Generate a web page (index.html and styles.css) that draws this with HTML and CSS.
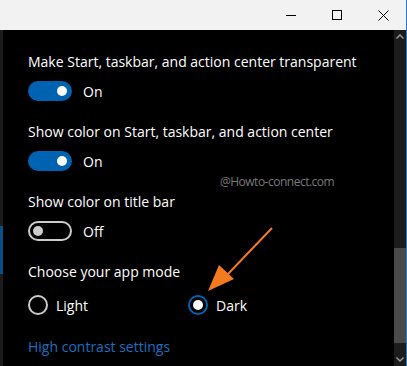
FILE: index.html
```html
<!DOCTYPE html>
<html lang="en">
<head>
    <meta charset="UTF-8">
    <title>Colors</title>
    <link rel="stylesheet" href="styles.css">
</head>
<body>
  <div class="window">
    <header class="titlebar">
      <div class="tb-btn">
        <svg width="10" height="10" viewBox="0 0 10 10"><path d="M0 5.5h10" stroke="#000" stroke-width="1"/></svg>
      </div>
      <div class="tb-btn">
        <svg width="10" height="10" viewBox="0 0 10 10"><rect x="0.5" y="0.5" width="9" height="9" fill="none" stroke="#000" stroke-width="1"/></svg>
      </div>
      <div class="tb-btn">
        <svg width="11" height="11" viewBox="0 0 11 11"><path d="M0.5 0.5L10.5 10.5M10.5 0.5L0.5 10.5" stroke="#000" stroke-width="1"/></svg>
      </div>
    </header>

    <div class="frame">
      <div class="side-strip"><div class="side-mark"></div></div>

      <main class="content">
        <p class="label">Make Start, taskbar, and action center transparent</p>
        <div class="switch-row">
          <span class="toggle on"><span class="knob"></span></span>
          <span class="state">On</span>
        </div>

        <p class="label">Show color on Start, taskbar, and action center</p>
        <div class="switch-row">
          <span class="toggle on"><span class="knob"></span></span>
          <span class="state">On</span>
        </div>

        <p class="label">Show color on title bar</p>
        <div class="switch-row">
          <span class="toggle off"><span class="knob"></span></span>
          <span class="state">Off</span>
        </div>

        <p class="label label-mode">Choose your app mode</p>
        <div class="radio-row">
          <label class="radio-opt"><span class="radio"></span>Light</label>
          <label class="radio-opt"><span class="radio checked"><span class="dot"></span></span>Dark</label>
        </div>

        <a class="link" href="#">High contrast settings</a>

        <!-- watermark + arrow lie over the page -->
        <span class="watermark">@Howto-connect.com</span>
        <svg class="arrow" width="80" height="80" viewBox="0 0 80 80">
          <path d="M67 5L22 52" stroke="#f37a1f" stroke-width="2"/>
          <path d="M3 68L14 42L29 56Z" fill="#f37a1f"/>
        </svg>
      </main>

      <div class="scrollbar">
        <svg class="chev" width="8" height="5" viewBox="0 0 8 5"><path d="M0.5 4.5L4 1L7.5 4.5" fill="none" stroke="#a0a0a0" stroke-width="1.3"/></svg>
        <div class="track"><div class="thumb"></div></div>
        <svg class="chev" width="8" height="5" viewBox="0 0 8 5"><path d="M0.5 0.5L4 4L7.5 0.5" fill="none" stroke="#a0a0a0" stroke-width="1.3"/></svg>
      </div>
    </div>
  </div>
</body>
</html>
```

FILE: styles.css
```css
body {
    margin: 0;
    background-color: #000;
    font-family: "Open Sans", "Noto Sans", sans-serif;
}

.window {
    width: 407px;
    height: 366px;
    display: flex;
    flex-direction: column;
    border-right: 1px solid #1b7fd0;
    box-sizing: border-box;
    overflow: hidden;
}

/* title bar */
.titlebar {
    height: 30px;
    background-color: #f2f2f2;
    display: flex;
    justify-content: flex-end;
}

.tb-btn {
    width: 46px;
    height: 30px;
    display: flex;
    align-items: center;
    justify-content: center;
}

.frame {
    flex: 1;
    display: flex;
    min-height: 0;
}

.side-strip {
    width: 3px;
    background-color: #1c1c1c;
    padding-top: 196px;
}

.side-mark {
    height: 48px;
    background-color: #0b4f88;
}

/* settings */
.content {
    flex: 1;
    position: relative;
    background-color: #000;
    padding: 22px 0 0 25px;
    color: #fff;
}

.label {
    margin: 0;
    font-size: 14px;
    line-height: 20px;
    height: 20px;
    white-space: nowrap;
}

.switch-row {
    display: flex;
    align-items: center;
    height: 20px;
    margin: 9px 0 21px;
}

.toggle {
    width: 44px;
    height: 20px;
    border-radius: 10px;
    box-sizing: border-box;
    display: flex;
    align-items: center;
}

.toggle.on {
    background-color: #0063b1;
    justify-content: flex-end;
    padding-right: 5px;
}

.toggle.off {
    border: 2px solid #cccccc;
    padding-left: 3px;
}

.knob {
    width: 10px;
    height: 10px;
    border-radius: 50%;
    background-color: #fff;
}

.toggle.off .knob {
    background-color: #cccccc;
}

.state {
    margin-left: 11px;
    font-size: 14px;
}

.radio-row {
    display: flex;
    height: 20px;
    margin: 13px 0 22px;
}

.radio-opt {
    width: 160px;
    display: flex;
    align-items: center;
    font-size: 14px;
}

.radio {
    width: 20px;
    height: 20px;
    border-radius: 50%;
    border: 2px solid #cccccc;
    box-sizing: border-box;
    margin-right: 8px;
    display: flex;
    align-items: center;
    justify-content: center;
}

.radio.checked {
    border-color: #0063b1;
}

.dot {
    width: 10px;
    height: 10px;
    border-radius: 50%;
    background-color: #fff;
}

.link {
    display: block;
    font-size: 14px;
    line-height: 20px;
    color: #1a6fc0;
    text-decoration: none;
}

.watermark {
    position: absolute;
    left: 217px;
    top: 143px;
    font-size: 12px;
    letter-spacing: -0.5px;
    color: #7a7a7a;
}

.arrow {
    position: absolute;
    left: 202px;
    top: 193px;
}

/* scrollbar */
.scrollbar {
    width: 12px;
    background-color: #1c1c1c;
    display: flex;
    flex-direction: column;
    align-items: center;
}

.chev {
    margin: 4px 0;
}

.track {
    flex: 1;
    width: 12px;
    padding-top: 205px;
}

.thumb {
    height: 95px;
    background-color: #4a4a4a;
}
```
